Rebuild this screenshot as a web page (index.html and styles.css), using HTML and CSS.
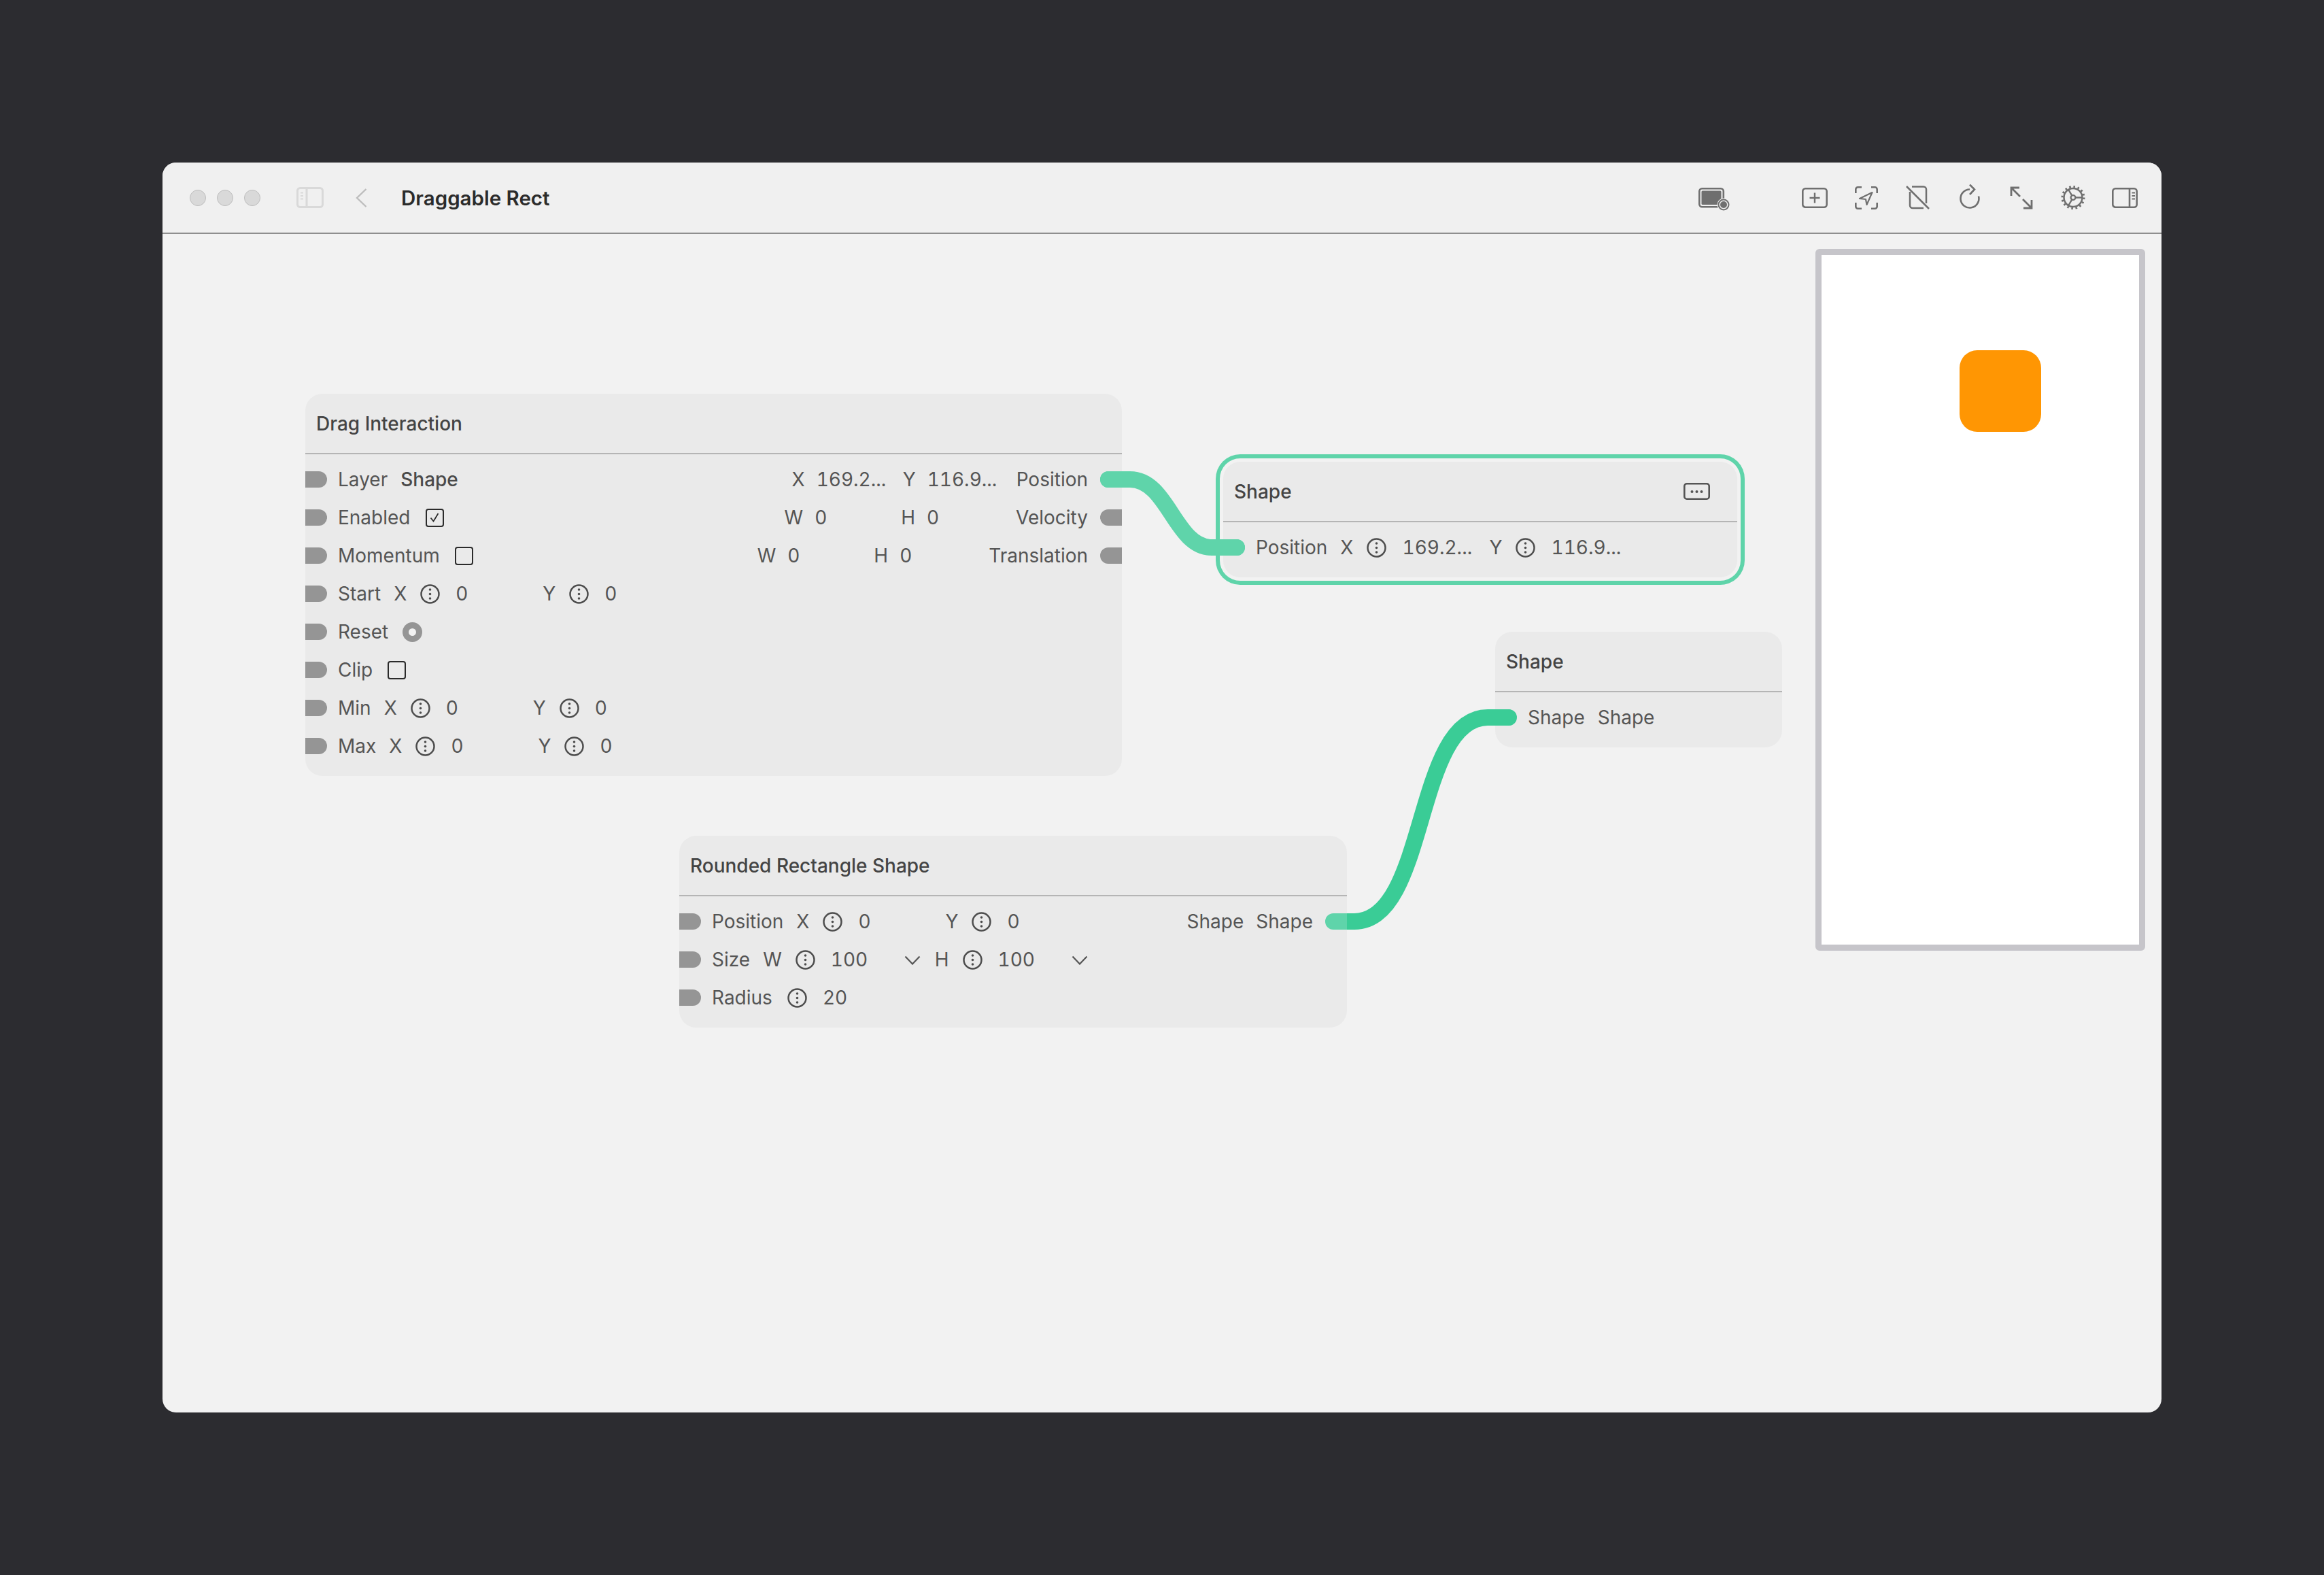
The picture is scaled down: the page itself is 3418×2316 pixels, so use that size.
FILE: index.html
```html
<!DOCTYPE html>
<html lang="en">
<head>
<meta charset="utf-8">
<title>Draggable Rect</title>
<link rel="stylesheet" href="styles.css">
</head>
<body>
<svg class="defs" width="0" height="0" aria-hidden="true">
  <symbol id="info" viewBox="0 0 29 29">
    <circle cx="14.5" cy="14.5" r="13" fill="none" stroke="currentColor" stroke-width="2.5"/>
    <circle cx="14.5" cy="8" r="1.8" fill="currentColor"/>
    <circle cx="14.5" cy="14.5" r="1.8" fill="currentColor"/>
    <circle cx="14.5" cy="21" r="1.8" fill="currentColor"/>
  </symbol>
  <symbol id="chev" viewBox="0 0 24 14">
    <path d="M1.5 1.5 L12 12.5 L22.5 1.5" fill="none" stroke="currentColor" stroke-width="2.2"/>
  </symbol>
</svg>

<main class="window">
  <header class="titlebar">
    <span class="light"></span><span class="light"></span><span class="light"></span>
    <svg class="sidebar-icon" viewBox="0 0 40 31">
      <rect x="1.5" y="1.5" width="37" height="28" rx="4" fill="none" stroke="#d9d9d9" stroke-width="3"/>
      <path d="M15 2V29" stroke="#d9d9d9" stroke-width="3"/>
      <path d="M6 8.5H10M6 13H10M6 17.5H10" stroke="#d9d9d9" stroke-width="2"/>
    </svg>
    <svg class="back-icon" viewBox="0 0 17 28">
      <path d="M15.5 1 L2 14 L15.5 27" fill="none" stroke="#bdbdbd" stroke-width="2.4"/>
    </svg>
    <h1 class="doc-title">Draggable Rect</h1>
    <div class="tools">
      <svg class="tool-record" viewBox="0 0 46 40">
        <rect x="1.3" y="6.3" width="35.5" height="27" rx="4" fill="none" stroke="#6f6f6f" stroke-width="2.6"/>
        <rect x="4.5" y="9.5" width="29" height="20.5" rx="1.5" fill="#6f6f6f"/>
        <circle cx="37" cy="30" r="9.5" fill="#f0f0f0"/>
        <circle cx="37" cy="30" r="7.5" fill="none" stroke="#6f6f6f" stroke-width="2"/>
        <circle cx="37" cy="30" r="5" fill="#6f6f6f"/>
      </svg>
      <svg class="tool" viewBox="0 0 40 40">
        <rect x="2.3" y="6.3" width="35.4" height="27.4" rx="4" fill="none" stroke="#6f6f6f" stroke-width="2.6"/>
        <path d="M12.5 20H27.5M20 12.5V27.5" stroke="#6f6f6f" stroke-width="2.4" fill="none"/>
      </svg>
      <svg class="tool" viewBox="0 0 40 40">
        <path d="M4.3 13V7.5a3.2 3.2 0 0 1 3.2-3.2H13M27 4.3H32.5a3.2 3.2 0 0 1 3.2 3.2V13M35.7 27V32.5a3.2 3.2 0 0 1-3.2 3.2H27M13 35.7H7.5a3.2 3.2 0 0 1-3.2-3.2V27" fill="none" stroke="#6f6f6f" stroke-width="2.6"/>
        <path d="M28.5 12 L10 21 L19 22 L20.5 30 Z" fill="none" stroke="#6f6f6f" stroke-width="2.2" stroke-linejoin="round"/>
      </svg>
      <svg class="tool" viewBox="0 0 40 40">
        <path d="M11 3.5H28a4 4 0 0 1 4 4V28M8 11V31a4 4 0 0 0 4 4H28" fill="none" stroke="#6f6f6f" stroke-width="2.5"/>
        <path d="M3 3L36 36" stroke="#6f6f6f" stroke-width="2.5"/>
      </svg>
      <svg class="tool" viewBox="0 0 40 40">
        <path d="M20 7.5A13.5 13.5 0 1 0 33 17.5" fill="none" stroke="#6f6f6f" stroke-width="2.6"/>
        <path d="M20 0.5L27 7.5L20 15" fill="none" stroke="#6f6f6f" stroke-width="2.6"/>
      </svg>
      <svg class="tool" viewBox="0 0 40 40">
        <path d="M5 17V5H17M5 5L18 18M22 22L35 35M23 35H35V23" fill="none" stroke="#6f6f6f" stroke-width="2.8"/>
      </svg>
      <svg class="tool" viewBox="0 0 40 40">
        <circle cx="20" cy="19.5" r="13.5" fill="none" stroke="#6f6f6f" stroke-width="2.5"/>
        <circle cx="20" cy="19.5" r="16" fill="none" stroke="#6f6f6f" stroke-width="3" stroke-dasharray="2.6 3.68"/>
        <circle cx="20" cy="19.5" r="3.4" fill="none" stroke="#6f6f6f" stroke-width="2.3"/>
        <path d="M23.4 19.5H33.5M18.3 16.6L13.2 7.8M18.3 22.4L13.2 31.2" stroke="#6f6f6f" stroke-width="2.3" fill="none"/>
      </svg>
      <svg class="tool" viewBox="0 0 40 40">
        <rect x="2.3" y="6.3" width="35.4" height="27.4" rx="4" fill="none" stroke="#6f6f6f" stroke-width="2.6"/>
        <path d="M27 6V34" stroke="#6f6f6f" stroke-width="2.6"/>
        <path d="M30.5 12.5H35M30.5 17H35M30.5 21.5H35" stroke="#6f6f6f" stroke-width="2"/>
      </svg>
    </div>
  </header>

  <section class="canvas">
    <article class="node node-drag">
      <h2 class="node-head">Drag Interaction</h2>
      <div class="node-body">
        <div class="row">
          <span class="port in"></span>
          <span class="label first">Layer</span><span class="strong">Shape</span>
          <div class="outs">
            <span class="axis">X</span><span class="val">169.2...</span>
            <span class="axis">Y</span><span class="val">116.9...</span>
            <span class="out-label">Position</span>
            <span class="port out live"></span>
          </div>
        </div>
        <div class="row">
          <span class="port in"></span>
          <span class="label first">Enabled</span>
          <span class="box"><svg class="tick" viewBox="0 0 20 20"><path d="M4.5 10.5L8.5 15.5L15.5 4" fill="none" stroke="#2b2b2b" stroke-width="1.8"/></svg></span>
          <div class="outs">
            <span class="axis">W</span><span class="val">0</span>
            <span class="axis">H</span><span class="val">0</span>
            <span class="out-label">Velocity</span>
            <span class="port out"></span>
          </div>
        </div>
        <div class="row">
          <span class="port in"></span>
          <span class="label first">Momentum</span><span class="box"></span>
          <div class="outs">
            <span class="axis">W</span><span class="val">0</span>
            <span class="axis">H</span><span class="val">0</span>
            <span class="out-label">Translation</span>
            <span class="port out"></span>
          </div>
        </div>
        <div class="row">
          <span class="port in"></span>
          <span class="label first">Start</span>
          <span class="axis">X</span><svg class="info"><use href="#info"/></svg><span class="val">0</span>
          <span class="axis">Y</span><svg class="info"><use href="#info"/></svg><span class="val">0</span>
        </div>
        <div class="row">
          <span class="port in"></span>
          <span class="label first">Reset</span><span class="pulse"></span>
        </div>
        <div class="row">
          <span class="port in"></span>
          <span class="label first">Clip</span><span class="box"></span>
        </div>
        <div class="row">
          <span class="port in"></span>
          <span class="label first">Min</span>
          <span class="axis">X</span><svg class="info"><use href="#info"/></svg><span class="val">0</span>
          <span class="axis">Y</span><svg class="info"><use href="#info"/></svg><span class="val">0</span>
        </div>
        <div class="row">
          <span class="port in"></span>
          <span class="label first">Max</span>
          <span class="axis">X</span><svg class="info"><use href="#info"/></svg><span class="val">0</span>
          <span class="axis">Y</span><svg class="info"><use href="#info"/></svg><span class="val">0</span>
        </div>
      </div>
    </article>

    <article class="node node-selected">
      <h2 class="node-head">Shape
        <svg class="menu" viewBox="0 0 39 25">
          <rect x="1.3" y="1.3" width="36.4" height="22.4" rx="3.5" fill="none" stroke="#555" stroke-width="2.6"/>
          <circle cx="12.5" cy="13" r="2" fill="#555"/><circle cx="19.5" cy="13" r="2" fill="#555"/><circle cx="26.5" cy="13" r="2" fill="#555"/>
        </svg>
      </h2>
      <div class="node-body">
        <div class="row">
          <span class="port in live"></span>
          <span class="label first">Position</span>
          <span class="axis">X</span><svg class="info"><use href="#info"/></svg><span class="val">169.2...</span>
          <span class="axis">Y</span><svg class="info"><use href="#info"/></svg><span class="val">116.9...</span>
        </div>
      </div>
    </article>

    <article class="node node-layer">
      <h2 class="node-head">Shape</h2>
      <div class="node-body">
        <div class="row">
          <span class="port in solid"></span>
          <span class="label first">Shape</span><span class="label">Shape</span>
        </div>
      </div>
    </article>

    <svg class="wires" viewBox="239 344 2940 1733">
      <path class="wire-solid" d="M1975 1355H1992C2100 1355 2080 1055 2188 1055H2218"/>
    </svg>

    <article class="node node-rect">
      <h2 class="node-head">Rounded Rectangle Shape</h2>
      <div class="node-body">
        <div class="row">
          <span class="port in"></span>
          <span class="label first">Position</span>
          <span class="axis">X</span><svg class="info"><use href="#info"/></svg><span class="val">0</span>
          <span class="axis">Y</span><svg class="info"><use href="#info"/></svg><span class="val">0</span>
          <div class="outs">
            <span class="label">Shape</span>
            <span class="out-label tight">Shape</span>
            <span class="port out live"></span>
          </div>
        </div>
        <div class="row">
          <span class="port in"></span>
          <span class="label first">Size</span>
          <span class="axis">W</span><svg class="info"><use href="#info"/></svg><span class="val">100</span><svg class="chev"><use href="#chev"/></svg>
          <span class="axis">H</span><svg class="info"><use href="#info"/></svg><span class="val">100</span><svg class="chev"><use href="#chev"/></svg>
        </div>
        <div class="row">
          <span class="port in"></span>
          <span class="label first wide">Radius</span>
          <svg class="info"><use href="#info"/></svg><span class="val">20</span>
        </div>
      </div>
    </article>

    <svg class="wires" viewBox="239 344 2940 1733">
      <path class="wire-live" d="M1630 705H1662C1718 705 1728 805 1782 805H1819"/>
    </svg>

    <aside class="preview">
      <div class="rect"></div>
    </aside>
  </section>
</main>
</body>
</html>
```

FILE: styles.css
```css
* { box-sizing: border-box; }
html, body { margin: 0; height: 100%; }
body {
  background: #2c2c30;
  padding: 239px 0 0 239px;
  font-family: Inter, "Noto Sans", sans-serif;
  font-size: 28px;
  color: #555;
}
.defs { position: absolute; }

.window {
  width: 2940px;
  height: 1838px;
  background: #f2f2f2;
  border-radius: 20px;
  overflow: hidden;
  display: flex;
  flex-direction: column;
}

.titlebar {
  height: 105px;
  flex: none;
  background: #f0f0f0;
  border-bottom: 2px solid #8f8f8f;
  display: flex;
  align-items: center;
  padding: 0 34px 0 40px;
}
.light {
  width: 24px;
  height: 24px;
  border-radius: 50%;
  background: #d9d9d9;
  border: 1px solid #bdbdbd;
  margin-right: 16px;
}
.sidebar-icon { width: 40px; height: 31px; margin-left: 37px; flex: none; }
.back-icon { width: 17px; height: 28px; margin-left: 47px; flex: none; }
.doc-title {
  margin: 0 0 0 50px;
  font-size: 29.5px;
  font-weight: 600;
  color: #2b2b2b;
}
.tools { margin-left: auto; display: flex; align-items: center; gap: 36px; }
.tool { width: 40px; height: 40px; flex: none; }
.tool-record { width: 46px; height: 40px; flex: none; margin-right: 69px; }

.canvas { position: relative; flex: 1; }

.node {
  position: absolute;
  background: #eaeaea;
  border-radius: 25px;
}
.node-drag { left: 210px; top: 235px; width: 1201px; }
.node-selected {
  left: 1560px;
  top: 335px;
  width: 756px;
  box-shadow: 0 0 0 5px #f2f2f2, 0 0 0 11px #5fd4aa;
}
.node-layer { left: 1960px; top: 585px; width: 422px; }
.node-rect { left: 760px; top: 885px; width: 982px; }

.node-head {
  margin: 0;
  height: 89px;
  padding: 0 40px 0 16px;
  display: flex;
  align-items: center;
  justify-content: space-between;
  border-bottom: 2px solid #b5b5b5;
  font-size: 28px;
  font-weight: 500;
  color: #444;
}
.menu { width: 39px; height: 25px; }
.node-body { padding: 9px 0 16px; }

.row { height: 56px; display: flex; align-items: center; white-space: nowrap; }
.port { width: 32px; height: 24px; background: #959595; flex: none; }
.port.in { border-radius: 0 12px 12px 0; margin-right: 16px; }
.port.out { border-radius: 12px 0 0 12px; }
.port.live { background: #5fd4aa; }
.port.solid { background: #3acc96; }

.label { margin-right: 18px; }
.first { margin-right: 19px; }
.wide { margin-right: 22px; }
.strong { font-weight: 500; color: #4a4a4a; }
.axis { margin-right: 20px; }
.val {
  width: 104px;
  margin-right: 24px;
  flex: none;
  font-variant-numeric: tabular-nums;
}
.info { width: 29px; height: 29px; margin-right: 23px; color: #4d4d4d; flex: none; }
.chev { width: 24px; height: 14px; margin: 2px 21px 0 -20px; color: #555; flex: none; }
.outs { margin-left: auto; display: flex; align-items: center; }
.outs .axis { margin-right: 17px; }
.outs .val { margin-right: 23px; }
.out-label { margin: 0 18px 0 4px; }
.tight { margin-left: 0; }

.box {
  width: 27px;
  height: 27px;
  border: 2.5px solid #2b2b2b;
  border-radius: 4px;
  margin-left: 3px;
  display: flex;
  align-items: center;
  justify-content: center;
}
.tick { width: 20px; height: 20px; }
.pulse {
  width: 29px;
  height: 29px;
  border-radius: 50%;
  border: 9px solid #959595;
  background: #f2f2f2;
  margin-left: 2px;
}

.wires {
  position: absolute;
  inset: 0;
  width: 100%;
  height: 100%;
  pointer-events: none;
}
.wire-solid, .wire-live {
  fill: none;
  stroke-width: 24;
  stroke-linecap: round;
}
.wire-solid { stroke: #3acc96; }
.wire-live { stroke: #5fd4aa; }

.preview {
  position: absolute;
  left: 2431px;
  top: 22px;
  width: 485px;
  height: 1032px;
  background: #fff;
  border: 9px solid #c6c5ca;
  border-radius: 6px;
}
.rect {
  position: absolute;
  left: 203px;
  top: 140px;
  width: 120px;
  height: 120px;
  background: #ff9603;
  border-radius: 26px;
}
```
